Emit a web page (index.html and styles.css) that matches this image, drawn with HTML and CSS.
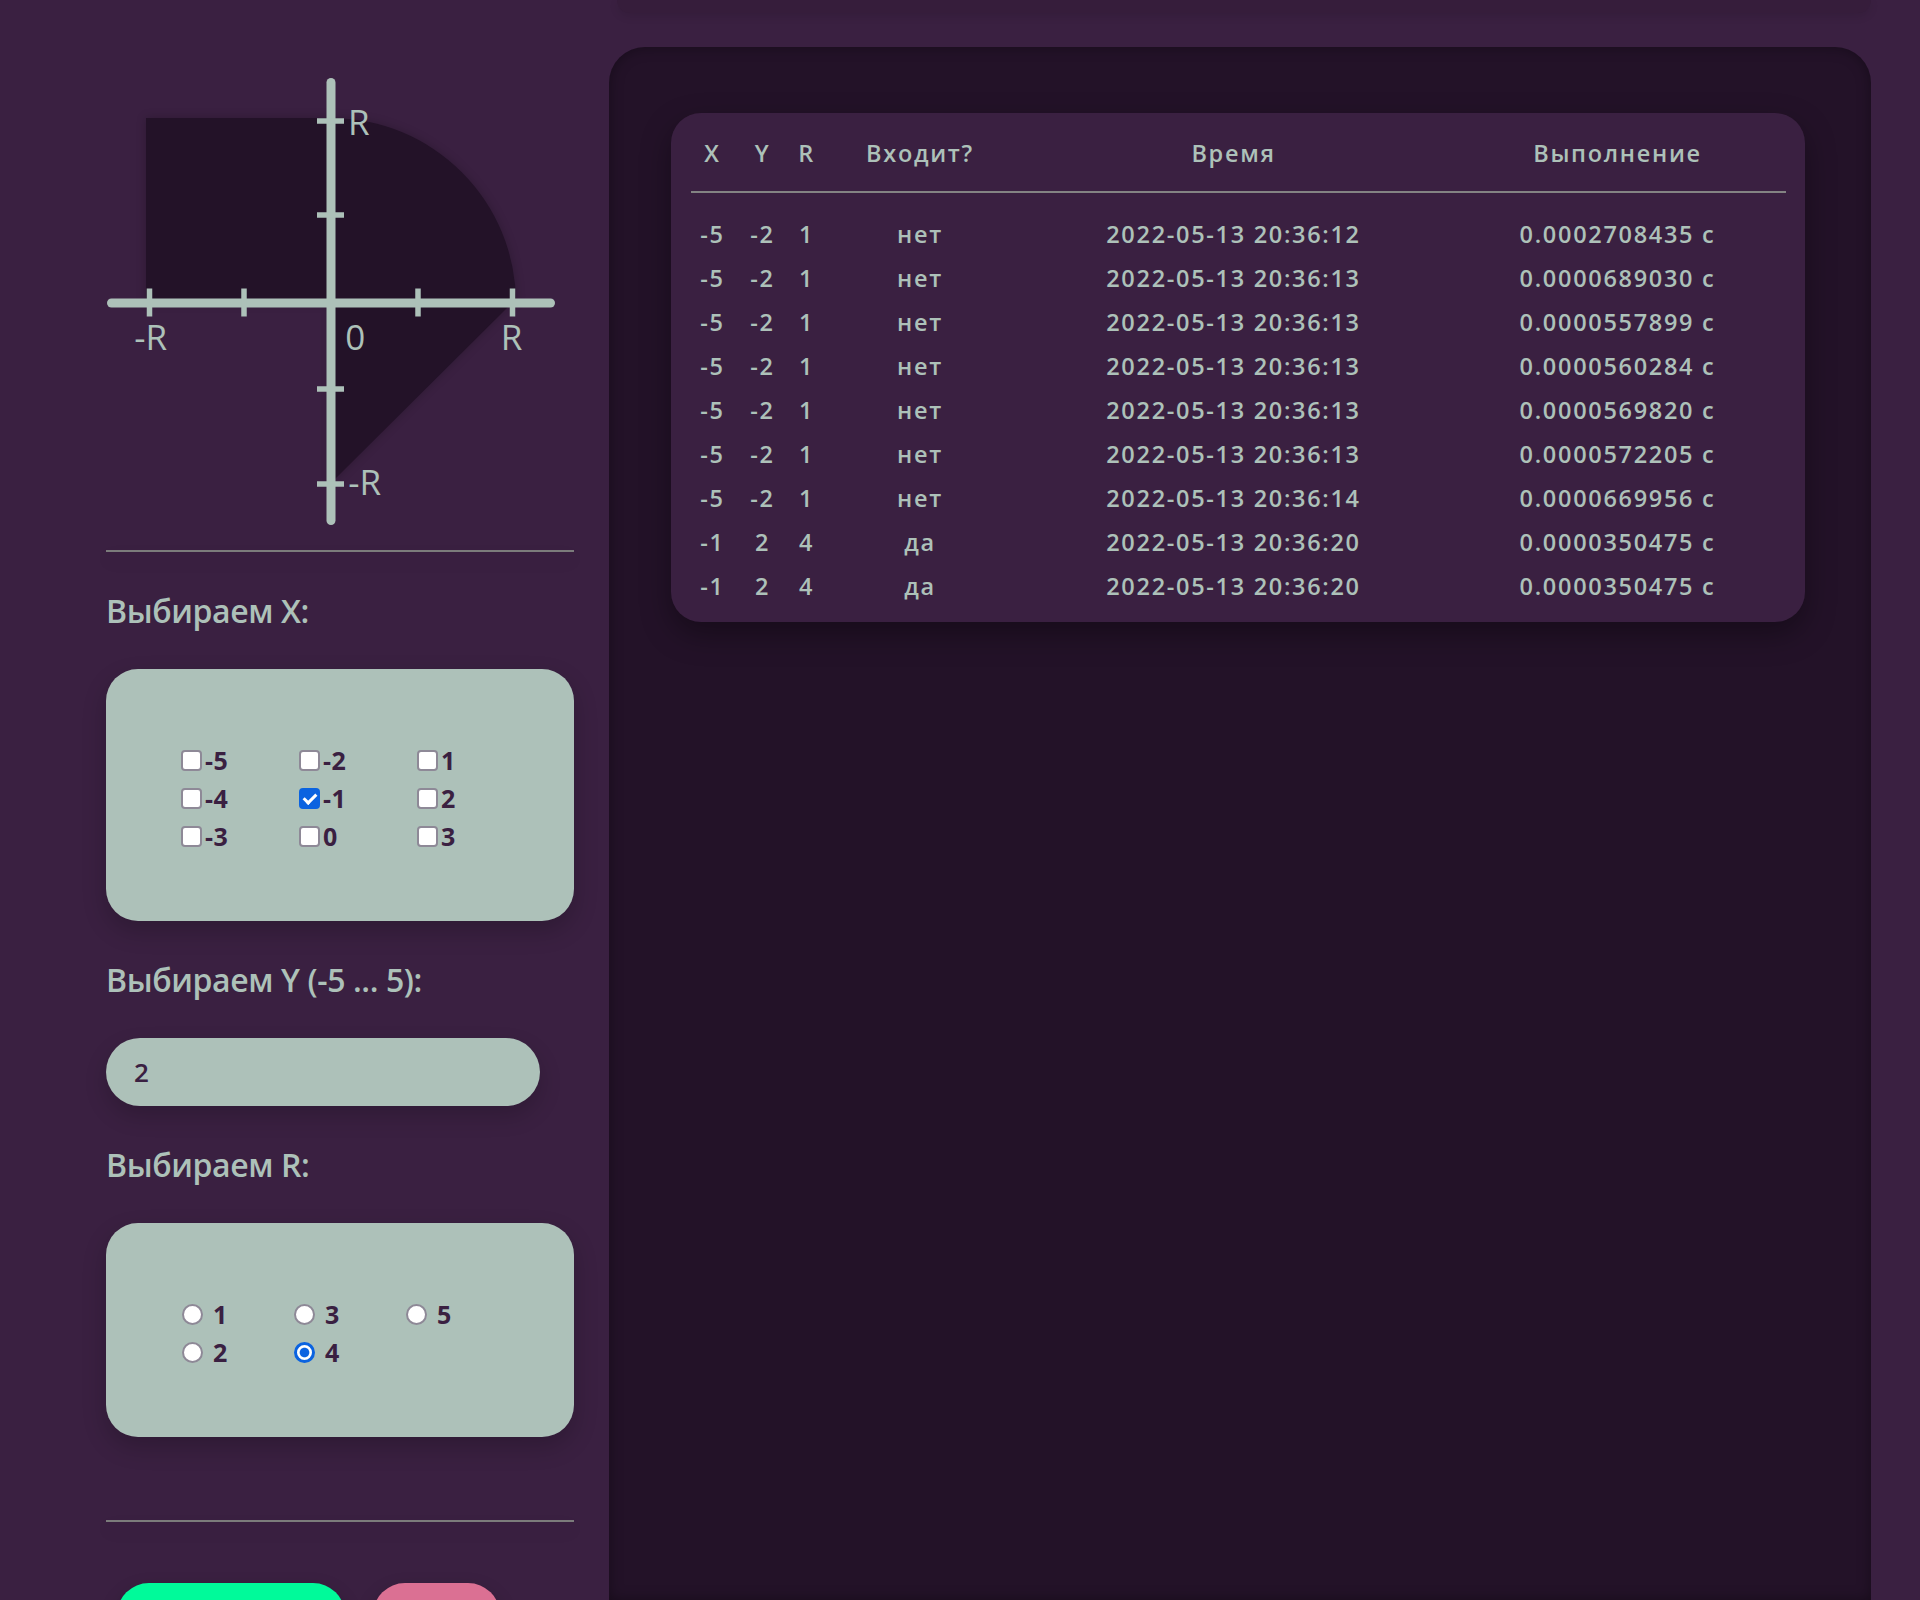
FILE: index.html
```html
<!DOCTYPE html>
<html lang="ru">
<head>
<meta charset="utf-8">
<title>Лабораторная работа</title>
<link rel="stylesheet" href="styles.css">
</head>
<body>
<div class="page">
  <aside class="controls">
    <svg class="graph" width="468" height="480" viewBox="0 0 468 480">
      <g class="area">
        <rect x="40" y="58" width="185" height="185"/>
        <path d="M225 243 V58 A185 185 0 0 1 410 243 Z"/>
        <polygon points="225,243 406,243 225,423"/>
      </g>
      <g class="axis">
        <line x1="5.5" y1="243" x2="444.5" y2="243"/>
        <line x1="225" y1="22.5" x2="225" y2="460.5"/>
      </g>
      <g class="ticks">
        <line x1="43.5" y1="228.5" x2="43.5" y2="256.5"/>
        <line x1="138" y1="228.5" x2="138" y2="256.5"/>
        <line x1="312" y1="228.5" x2="312" y2="256.5"/>
        <line x1="406.5" y1="228.5" x2="406.5" y2="256.5"/>
        <line x1="211" y1="61" x2="238" y2="61"/>
        <line x1="211" y1="155" x2="238" y2="155"/>
        <line x1="211" y1="329" x2="238" y2="329"/>
        <line x1="211" y1="424" x2="238" y2="424"/>
      </g>
      <g class="labels">
        <text x="242" y="75">R</text>
        <text x="28.3" y="289.5">-R</text>
        <text x="239.3" y="289.5">0</text>
        <text x="394.8" y="289.5">R</text>
        <text x="242.3" y="434.5">-R</text>
      </g>
    </svg>
    <hr class="divider">

    <h3 class="field-label">Выбираем X:</h3>
    <div class="choice-box">
      <div class="choice-grid x-grid">
        <label class="opt"><input type="checkbox" name="x" value="-5">-5</label>
        <label class="opt"><input type="checkbox" name="x" value="-4">-4</label>
        <label class="opt"><input type="checkbox" name="x" value="-3">-3</label>
        <label class="opt"><input type="checkbox" name="x" value="-2">-2</label>
        <label class="opt"><input type="checkbox" name="x" value="-1" checked>-1</label>
        <label class="opt"><input type="checkbox" name="x" value="0">0</label>
        <label class="opt"><input type="checkbox" name="x" value="1">1</label>
        <label class="opt"><input type="checkbox" name="x" value="2">2</label>
        <label class="opt"><input type="checkbox" name="x" value="3">3</label>
      </div>
    </div>

    <h3 class="field-label">Выбираем Y (-5 ... 5):</h3>
    <input class="y-input" type="text" value="2">

    <h3 class="field-label">Выбираем R:</h3>
    <div class="choice-box">
      <div class="choice-grid r-grid">
        <label class="opt opt-radio"><input type="radio" name="r" value="1">1</label>
        <label class="opt opt-radio"><input type="radio" name="r" value="2">2</label>
        <label class="opt opt-radio"><input type="radio" name="r" value="3">3</label>
        <label class="opt opt-radio"><input type="radio" name="r" value="4" checked>4</label>
        <label class="opt opt-radio"><input type="radio" name="r" value="5">5</label>
      </div>
    </div>

    <hr class="divider divider-low">

    <div class="buttons">
      <button class="btn btn-send" type="button" aria-label="Отправить"></button>
      <button class="btn btn-reset" type="button" aria-label="Сброс"></button>
    </div>
  </aside>

  <div class="results-col">
    <div class="top-stub"></div>
    <section class="results">
      <div class="card">
        <table class="table">
          <colgroup>
            <col class="c-x"><col class="c-y"><col class="c-r">
            <col class="c-hit"><col class="c-time"><col class="c-exec">
          </colgroup>
          <thead>
            <tr><th>X</th><th>Y</th><th>R</th><th>Входит?</th><th>Время</th><th>Выполнение</th></tr>
          </thead>
          <tbody>
            <tr><td>-5</td><td>-2</td><td>1</td><td>нет</td><td>2022-05-13 20:36:12</td><td>0.0002708435 с</td></tr>
            <tr><td>-5</td><td>-2</td><td>1</td><td>нет</td><td>2022-05-13 20:36:13</td><td>0.0000689030 с</td></tr>
            <tr><td>-5</td><td>-2</td><td>1</td><td>нет</td><td>2022-05-13 20:36:13</td><td>0.0000557899 с</td></tr>
            <tr><td>-5</td><td>-2</td><td>1</td><td>нет</td><td>2022-05-13 20:36:13</td><td>0.0000560284 с</td></tr>
            <tr><td>-5</td><td>-2</td><td>1</td><td>нет</td><td>2022-05-13 20:36:13</td><td>0.0000569820 с</td></tr>
            <tr><td>-5</td><td>-2</td><td>1</td><td>нет</td><td>2022-05-13 20:36:13</td><td>0.0000572205 с</td></tr>
            <tr><td>-5</td><td>-2</td><td>1</td><td>нет</td><td>2022-05-13 20:36:14</td><td>0.0000669956 с</td></tr>
            <tr><td>-1</td><td>2</td><td>4</td><td>да</td><td>2022-05-13 20:36:20</td><td>0.0000350475 с</td></tr>
            <tr><td>-1</td><td>2</td><td>4</td><td>да</td><td>2022-05-13 20:36:20</td><td>0.0000350475 с</td></tr>
          </tbody>
        </table>
      </div>
    </section>
  </div>
</div>
</body>
</html>
```

FILE: styles.css
```css
* { box-sizing: border-box; }

html, body {
  margin: 0;
  background: #3a2041;
}

body {
  font-family: "Open Sans", "Noto Sans", sans-serif;
  color: #adc1b9;
}

.page {
  display: flex;
  align-items: stretch;
  gap: 35px;
  padding-left: 106px;
  height: 1600px;
  overflow: hidden;
}

/* ---------- left column ---------- */
.controls {
  width: 468px;
  flex: none;
  padding-top: 60px;
}

.graph {
  display: block;
}

.graph .area {
  fill: #231228;
  filter: drop-shadow(0 0 5px rgba(0, 0, 0, 0.22));
}

.graph .axis line {
  stroke: #adc1b9;
  stroke-width: 9;
  stroke-linecap: round;
}

.graph .ticks line {
  stroke: #adc1b9;
  stroke-width: 5.5;
}

.graph .labels text {
  font-family: "Open Sans", "Noto Sans", sans-serif;
  font-size: 35px;
  font-weight: 400;
  fill: #adc1b9;
}

.divider {
  display: block;
  height: 2px;
  border: 0;
  margin: 10px 0 0;
  background: #7b7b7b;
  box-shadow: 0 8px 16px rgba(0, 0, 0, 0.15);
}

.divider-low {
  margin-top: 83px;
}

.field-label {
  margin: 37px 0 0;
  font-size: 32px;
  font-weight: 600;
  letter-spacing: -0.4px;
  line-height: 43px;
  color: #adc1b9;
}

.choice-box {
  margin-top: 37px;
  background: #adc1b9;
  border-radius: 32px;
  padding: 72px 0 66px 75px;
  box-shadow: 0 10px 24px rgba(0, 0, 0, 0.2);
}

.choice-grid {
  display: grid;
  grid-auto-flow: column;
}

.x-grid {
  grid-template-columns: repeat(3, 118px);
  grid-template-rows: repeat(3, 38px);
}

.r-grid {
  padding-left: 1px;
  grid-template-columns: repeat(3, 112px);
  grid-template-rows: repeat(2, 38px);
}

.opt {
  display: flex;
  align-items: center;
  gap: 3px;
  font-size: 25px;
  font-weight: 700;
  letter-spacing: 0.4px;
  color: #3a2041;
}

.opt-radio {
  gap: 10px;
}

.opt input {
  appearance: none;
  -webkit-appearance: none;
  margin: 0;
  flex: none;
  width: 21px;
  height: 21px;
  background: #fff;
  border: 2.5px solid #8e8997;
  position: relative;
}

.opt input[type="checkbox"] {
  border-radius: 4px;
}

.opt input[type="checkbox"]:checked {
  background: #0b63e0;
  border-color: #0b63e0;
}

.opt input[type="checkbox"]:checked::after {
  content: "";
  position: absolute;
  left: 5px;
  top: 1px;
  width: 5px;
  height: 10px;
  border: solid #fff;
  border-width: 0 3px 3px 0;
  transform: rotate(45deg);
}

.opt input[type="radio"] {
  border-radius: 50%;
}

.opt input[type="radio"]:checked {
  border: 3px solid #0b63e0;
  background: radial-gradient(circle, #0b63e0 0 4.3px, #fff 5.3px);
}

.y-input {
  display: block;
  margin-top: 37px;
  width: 434px;
  height: 68px;
  border: 0;
  border-radius: 34px;
  background: #adc1b9;
  padding: 0 0 0 28px;
  font-family: "Open Sans", "Noto Sans", sans-serif;
  font-size: 26px;
  font-weight: 600;
  color: #3a2041;
  outline: none;
  box-shadow: 0 10px 22px rgba(0, 0, 0, 0.18);
}

.buttons {
  display: flex;
  gap: 28px;
  margin-top: 61px;
  padding-left: 11px;
}

.btn {
  height: 64px;
  border: 0;
  border-radius: 32px;
  box-shadow: 0 8px 20px rgba(0, 0, 0, 0.2);
}

.btn-send {
  width: 228px;
  background: #00fa9a;
}

.btn-reset {
  width: 127px;
  background: #db7093;
}

/* ---------- right column ---------- */
.results-col {
  width: 1262px;
  flex: none;
  display: flex;
  flex-direction: column;
}

.top-stub {
  height: 13px;
  margin-left: 8px;
  background: #361d3b;
  border-radius: 0 0 30px 30px;
  box-shadow: 0 3px 10px rgba(0, 0, 0, 0.1);
}

.results {
  flex: 1;
  margin-top: 33.5px;
  background: #231228;
  border-radius: 36px 36px 0 0;
  padding: 66px 66px 0 62px;
  box-shadow: inset 0 0 14px rgba(0, 0, 0, 0.35);
}

.card {
  background: #3a2041;
  border-radius: 30px;
  padding: 0 19.5px 14px;
  box-shadow: 0 12px 30px rgba(0, 0, 0, 0.35);
}

.table {
  width: 1095px;
  table-layout: fixed;
  border-collapse: separate;
  border-spacing: 0;
  font-size: 23.5px;
  font-weight: 600;
  letter-spacing: 1.7px;
  color: #adc1b9;
}

.c-x { width: 44px; }
.c-y { width: 56px; }
.c-r { width: 32px; }
.c-hit { width: 195px; }
.c-time { width: 432px; }
.c-exec { width: 336px; }

.table th {
  padding: 25px 0 23px;
  line-height: 30px;
  font-weight: 600;
  text-align: center;
  border-bottom: 2px solid #838383;
}

.table td {
  padding: 7px 0;
  line-height: 30px;
  text-align: center;
  white-space: nowrap;
}

.table tbody tr:first-child td {
  padding-top: 26px;
}
```
